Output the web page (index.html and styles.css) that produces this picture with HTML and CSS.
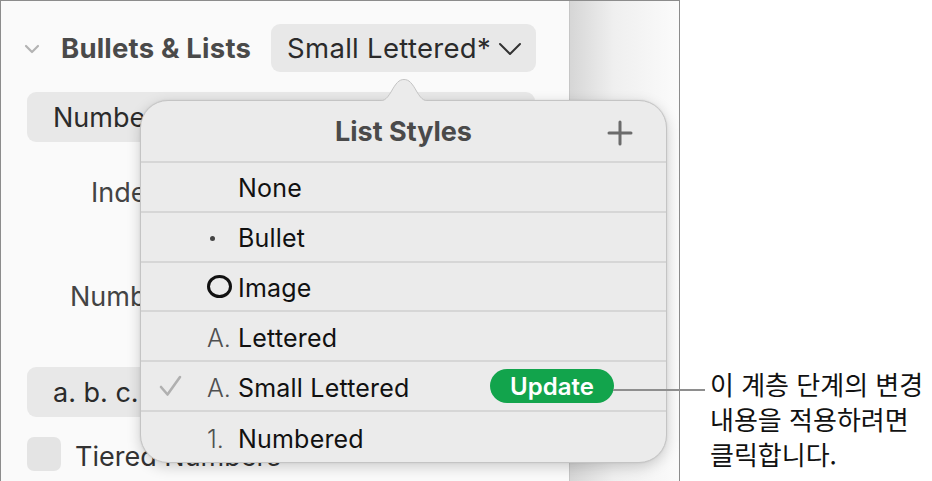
FILE: index.html
```html
<!DOCTYPE html>
<html lang="ko">
<head>
<meta charset="utf-8">
<title>List Styles</title>
<link rel="stylesheet" href="styles.css">
</head>
<body>
<div class="page">
  <div class="window">
    <div class="sidebar">
      <div class="header-row">
        <svg class="disclosure" width="16" height="10" viewBox="0 0 16 10"><polyline points="2,2 8,8 14,2" fill="none" stroke="#b3b3b3" stroke-width="2.2" stroke-linecap="round" stroke-linejoin="round"/></svg>
        <span class="section-title">Bullets &amp; Lists</span>
        <div class="popup-btn">
          <span>Small Lettered*</span>
          <svg width="24" height="14" viewBox="0 0 24 14"><polyline points="2,2 12,12 22,2" fill="none" stroke="#333" stroke-width="2" stroke-linecap="round" stroke-linejoin="round"/></svg>
        </div>
      </div>
      <div class="field-btn first">Numbered</div>
      <div class="label-row indent"><span class="label">Indent</span></div>
      <div class="label-row number"><span class="label">Number</span></div>
      <div class="field-btn abc">a. b. c.</div>
      <div class="check-row">
        <span class="checkbox"></span>
        <span class="check-label">Tiered Numbers</span>
      </div>
    </div>
    <div class="canvas"></div>

    <div class="popover">
      <svg class="arrow" width="60" height="24" viewBox="0 0 60 24">
        <path d="M0,23.5 C10,23.5 12,22 17,14 C22,5 25,1.5 30,1.5 C35,1.5 38,5 43,14 C48,22 50,23.5 60,23.5" fill="#ebebeb" stroke="#c4c4c4" stroke-width="1"/>
        <rect x="0" y="23" width="60" height="2" fill="#ebebeb"/>
      </svg>
      <div class="pop-header">
        <span class="pop-title">List Styles</span>
        <svg class="plus" width="26" height="26" viewBox="0 0 26 26"><path d="M13 2 V24 M2 13 H24" stroke="#6b6b6b" stroke-width="3" stroke-linecap="round"/></svg>
      </div>
      <div class="pop-row"><span class="ck"></span><span class="mk"></span><span class="txt">None</span></div>
      <div class="pop-row"><span class="ck"></span><span class="mk"><span class="dot"></span></span><span class="txt">Bullet</span></div>
      <div class="pop-row"><span class="ck"></span><span class="mk"><span class="ring"></span></span><span class="txt">Image</span></div>
      <div class="pop-row"><span class="ck"></span><span class="mk letter">A.</span><span class="txt">Lettered</span></div>
      <div class="pop-row"><span class="ck"><svg width="24" height="22" viewBox="0 0 24 22"><polyline points="2,12 8.5,19.5 21,2" fill="none" stroke="#b0b0b0" stroke-width="2.6" stroke-linecap="round" stroke-linejoin="round"/></svg></span><span class="mk letter">A.</span><span class="txt">Small Lettered</span><span class="update">Update</span></div>
      <div class="pop-row last"><span class="ck"></span><span class="mk letter">1.</span><span class="txt">Numbered</span></div>
    </div>
    <div class="leader"></div>
  </div>
  <div class="callout">이 계층 단계의 변경<br>내용을 적용하려면<br>클릭합니다.</div>
</div>
</body>
</html>
```

FILE: styles.css
```css
* { box-sizing: border-box; }
html, body { margin: 0; padding: 0; background: #fff; }
body {
  font-family: Inter, "Noto Sans", "Noto Sans CJK KR", sans-serif;
  width: 932px;
  height: 481px;
  overflow: hidden;
}
.page {
  display: flex;
  height: 481px;
}
.window {
  position: relative;
  width: 680px;
  height: 481px;
  display: flex;
  border-left: 1px solid #8c8c8c;
  border-top: 1px solid #8c8c8c;
  border-right: 1px solid #8c8c8c;
  flex: none;
}
.sidebar {
  width: 569px;
  background: #fafafa;
  border-right: 1px solid #c6c6c6;
  padding-top: 23px;
  display: flex;
  flex-direction: column;
}
.canvas {
  flex: 1;
  background: linear-gradient(to right, #d6d6d6, #efefef 40%, #fbfbfb);
}
.header-row {
  display: flex;
  align-items: center;
  height: 48px;
  padding-left: 23px;
}
.disclosure { margin-top: 2px; }
.section-title {
  margin-left: 21px;
  font-size: 27.5px;
  font-weight: 700;
  color: #4a4a4a;
  letter-spacing: 0.2px;
}
.popup-btn {
  margin-left: 20px;
  width: 265px;
  height: 48px;
  border-radius: 9px;
  background: #e8e8e8;
  display: flex;
  align-items: center;
  padding-left: 16px;
  gap: 7px;
  font-size: 27.5px;
  color: #2b2b2b;
  white-space: nowrap;
  letter-spacing: 0.3px;
}
.popup-btn svg { margin-top: 1px; flex: none; }
.field-btn {
  margin-left: 26px;
  width: 508px;
  height: 50px;
  border-radius: 9px;
  background: #e8e8e8;
  display: flex;
  align-items: center;
  padding-left: 26px;
  font-size: 27px;
  color: #2b2b2b;
}
.field-btn.first { margin-top: 20px; }
.label-row {
  display: flex;
  align-items: center;
  height: 40px;
  font-size: 27px;
  color: #444;
}
.label-row.indent { margin-top: 30px; padding-left: 90px; }
.label-row.number { margin-top: 64px; padding-left: 69px; }
.field-btn.abc { margin-top: 51px; }
.check-row {
  margin-top: 20px;
  display: flex;
  align-items: center;
  padding-left: 26px;
  height: 34px;
}
.checkbox {
  width: 34px;
  height: 34px;
  border-radius: 7px;
  background: #e4e4e4;
}
.check-label {
  margin-left: 14px;
  font-size: 27px;
  color: #333;
  padding-top: 4px;
}

/* popover */
.popover {
  position: absolute;
  left: 139px;
  top: 99px;
  width: 527px;
  height: 363px;
  background: #ebebeb;
  border: 1px solid #c4c4c4;
  border-radius: 28px;
  box-shadow: 0 4px 14px rgba(0,0,0,0.18), 0 0 2px rgba(0,0,0,0.1);
  display: flex;
  flex-direction: column;
}
.arrow {
  position: absolute;
  left: 233px;
  top: -23px;
}
.pop-header {
  position: relative;
  height: 62px;
  display: flex;
  align-items: center;
  justify-content: center;
  border-bottom: 2px solid #d6d6d6;
}
.pop-title {
  font-size: 27px;
  font-weight: 700;
  color: #4a4a4a;
  margin-top: 2px;
}
.plus {
  position: absolute;
  right: 33px;
  top: 19px;
}
.pop-row {
  height: 50px;
  display: flex;
  align-items: center;
  border-bottom: 2px solid #d6d6d6;
  padding-left: 18px;
  padding-right: 52px;
  padding-top: 3px;
  font-size: 25px;
  color: #111;
}
.pop-row.last { border-bottom: none; }
.ck {
  width: 46px;
  display: flex;
  align-items: center;
  margin-top: -3px;
}
.mk {
  width: 33px;
  display: flex;
  align-items: center;
  padding-left: 2px;
}
.mk.letter {
  color: #505050;
  font-weight: 300;
}
.dot {
  width: 5px;
  height: 5px;
  border-radius: 50%;
  background: #444;
  margin-left: 3px;
}
.ring {
  width: 25px;
  height: 23px;
  border: 3.2px solid #111;
  border-radius: 50%;
  margin-top: -3px;
}
.txt { flex: 1; font-weight: 400; letter-spacing: 0.2px; }
.update {
  width: 124px;
  height: 34px;
  border-radius: 17px;
  background: #12a44c;
  color: #fff;
  font-size: 24px;
  font-weight: 600;
  display: flex;
  align-items: center;
  justify-content: center;
  margin-top: -3px;
}
.leader {
  position: absolute;
  left: 612px;
  top: 388px;
  width: 92px;
  height: 2px;
  background: #8e8e8e;
}
.callout {
  padding-left: 30px;
  padding-top: 366px;
  font-family: "Noto Sans CJK KR", sans-serif;
  font-size: 26px;
  line-height: 35px;
  color: #111;
  white-space: nowrap;
}
```
